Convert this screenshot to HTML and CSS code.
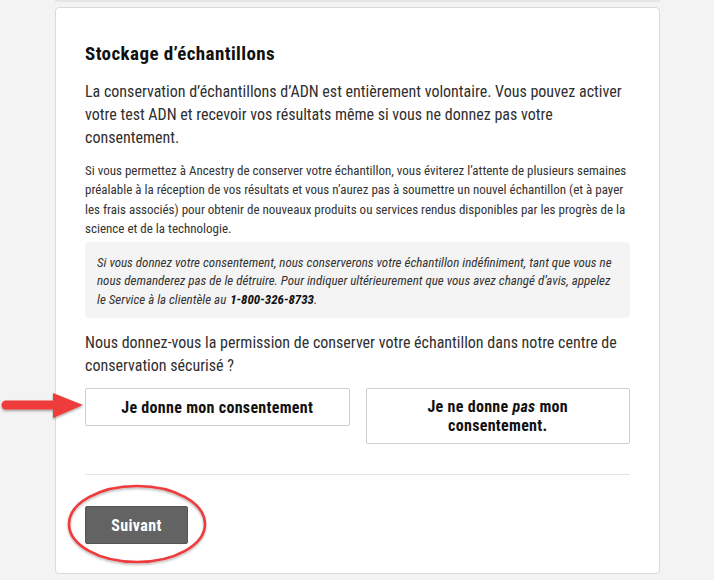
FILE: index.html
```html
<!DOCTYPE html>
<html lang="fr">
<head>
<meta charset="utf-8">
<title>Stockage d'échantillons</title>
<link rel="stylesheet" href="styles.css">
</head>
<body>
<div class="page">
  <div class="prev-card"></div>
  <section class="card">
    <h2 class="title">Stockage d’échantillons</h2>
    <p class="lead">La conservation d’échantillons d’ADN est entièrement volontaire. Vous pouvez activer votre test ADN et recevoir vos résultats même si vous ne donnez pas votre consentement.</p>
    <p class="small">Si vous permettez à Ancestry de conserver votre échantillon, vous éviterez l’attente de plusieurs semaines préalable à la réception de vos résultats et vous n’aurez pas à soumettre un nouvel échantillon (et à payer les frais associés) pour obtenir de nouveaux produits ou services rendus disponibles par les progrès de la science et de la technologie.</p>
    <div class="note">Si vous donnez votre consentement, nous conserverons votre échantillon indéfiniment, tant que vous ne nous demanderez pas de le détruire. Pour indiquer ultérieurement que vous avez changé d’avis, appelez le Service à la clientèle au <b class="phone">1-800-326-8733</b>.</div>
    <p class="lead question">Nous donnez-vous la permission de conserver votre échantillon dans notre centre de conservation sécurisé ?</p>
    <div class="choices">
      <button class="choice">Je donne mon consentement</button>
      <button class="choice two">Je ne donne <i>pas</i> mon<br>consentement.</button>
    </div>
    <hr class="sep">
    <button class="next">Suivant</button>
  </section>
  <svg class="arrow" width="90" height="40" viewBox="0 0 90 40">
    <defs>
      <filter id="sh" x="-20%" y="-40%" width="140%" height="180%">
        <feDropShadow dx="0" dy="1.5" stdDeviation="1.2" flood-color="#000" flood-opacity="0.35"/>
      </filter>
    </defs>
    <g filter="url(#sh)">
      <line x1="6" y1="20" x2="60" y2="20" stroke="#ee3b3b" stroke-width="9" stroke-linecap="round"/>
      <polygon points="53,8 83,20 53,33" fill="#ee3b3b"/>
    </g>
  </svg>
  <svg class="ring" width="150" height="90" viewBox="0 0 150 90">
    <defs>
      <filter id="sh2" x="-10%" y="-10%" width="120%" height="130%">
        <feDropShadow dx="0" dy="1.5" stdDeviation="1" flood-color="#000" flood-opacity="0.3"/>
      </filter>
    </defs>
    <ellipse cx="75" cy="44" rx="68" ry="38" fill="none" stroke="#ee3b3b" stroke-width="2.6" filter="url(#sh2)"/>
  </svg>
</div>
</body>
</html>
```

FILE: styles.css
```css
html, body {
  margin: 0;
  padding: 0;
  background: #f3f3f3;
}
body {
  font-family: "Roboto Condensed", "Open Sans", sans-serif;
  color: #333;
}
.page {
  position: relative;
  width: 714px;
  height: 580px;
  padding: 0 54px 0 55px;
  box-sizing: border-box;
}
.prev-card {
  height: 2px;
  background: #e6e6e6;
  margin-bottom: 5px;
}
.card {
  background: #fff;
  border: 1px solid #dadada;
  border-radius: 4px;
  padding: 34px 29px 29px 29px;
}
.title {
  margin: 0 0 14px;
  font-size: 19px;
  letter-spacing: 0.4px;
  font-weight: 700;
  color: #111;
  line-height: 24px;
}
.lead {
  margin: 0 0 12px;
  font-size: 16px;
  line-height: 23px;
  color: #2f2f2f;
}
.small {
  margin: 0 0 3px;
  font-size: 13px;
  line-height: 19.4px;
  color: #333;
}
.note {
  background: #f4f4f4;
  border-radius: 4px;
  padding: 12px 12px 9px 12px;
  font-size: 13px;
  line-height: 18.5px;
  font-style: italic;
  color: #333;
  margin-bottom: 13px;
}
.phone {
  display: inline-block;
  margin-left: 1px;
  font-weight: 700;
  color: #111;
}
.question {
  margin-bottom: 11px;
}
.choices {
  display: flex;
  gap: 16px;
  align-items: flex-start;
}
.choice {
  flex: 1;
  background: #fff;
  border: 1px solid #cfcfcf;
  border-radius: 2px;
  font-family: inherit;
  font-size: 16px;
  letter-spacing: 0.3px;
  font-weight: 700;
  color: #111;
  line-height: 19px;
  padding: 8.5px 10px;
}
.choice.two {
  padding: 7.5px 10px 8.5px;
}
.sep {
  border: 0;
  border-top: 1px solid #e4e4e4;
  margin: 30px 0 31px;
}
.next {
  display: block;
  background: #636363;
  color: #fff;
  border: 1px solid #555;
  border-radius: 2px;
  font-family: inherit;
  font-weight: 700;
  font-size: 16px;
  letter-spacing: 0.4px;
  width: 103px;
  height: 38px;
}
.arrow {
  position: absolute;
  left: 0;
  top: 385px;
}
.ring {
  position: absolute;
  left: 62px;
  top: 480px;
}
```
